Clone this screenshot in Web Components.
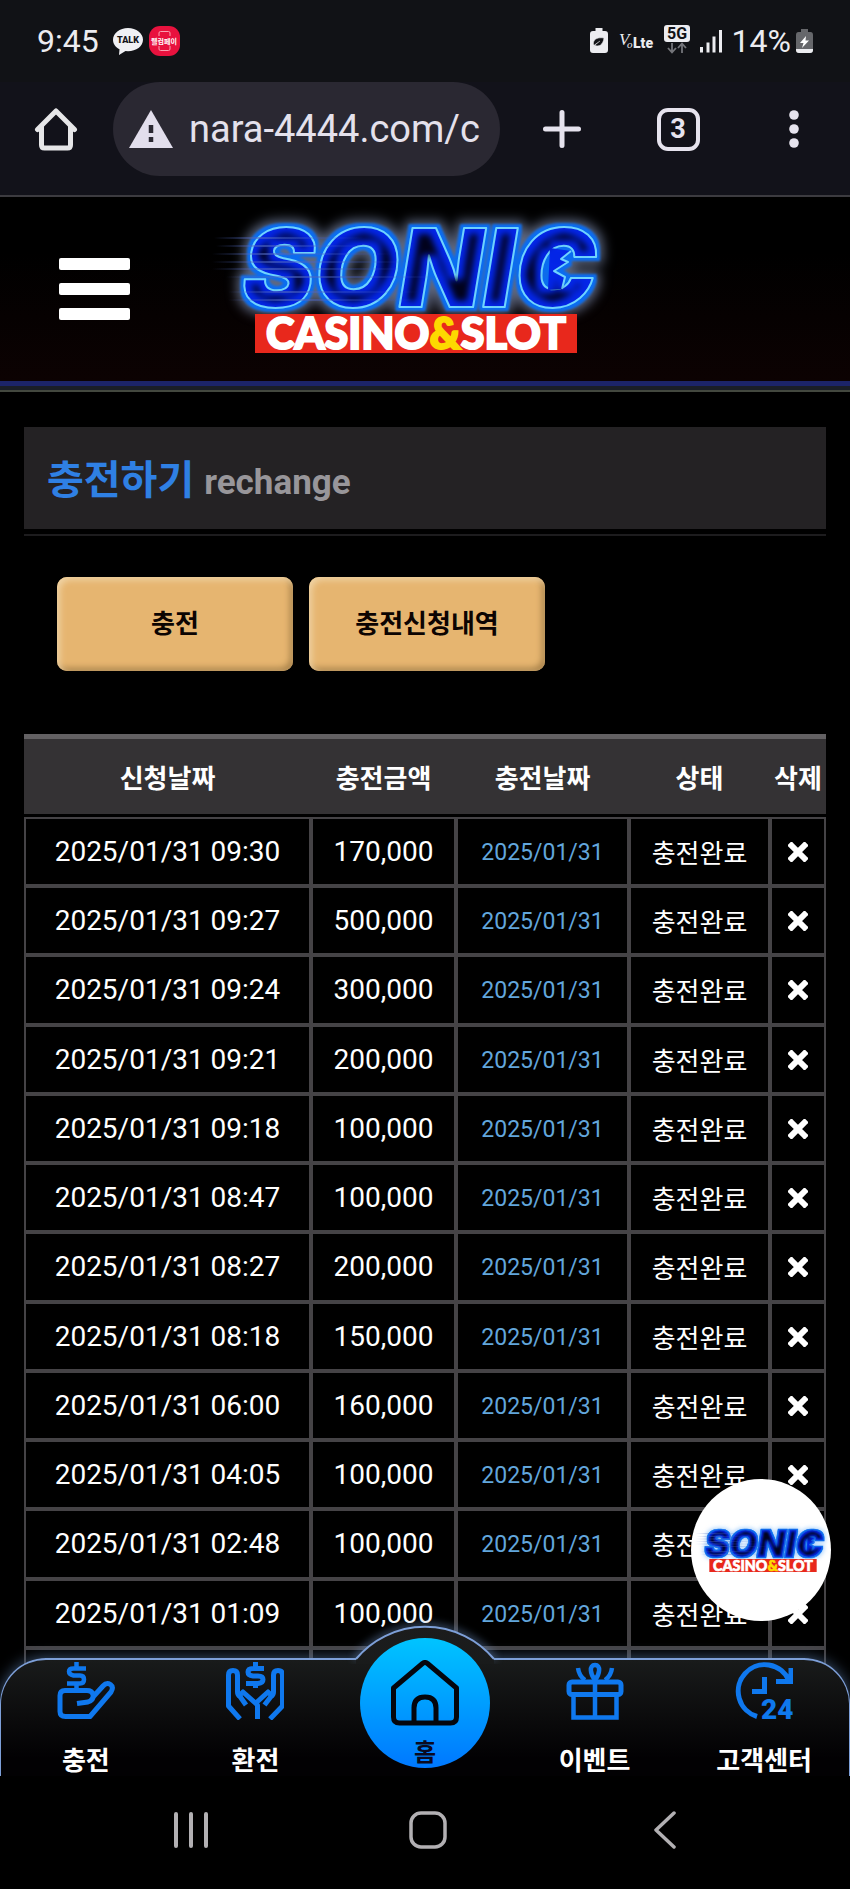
<!DOCTYPE html>
<html lang="ko">
<head>
<meta charset="utf-8">
<meta name="viewport" content="width=device-width, initial-scale=1">
<title>충전하기</title>
<style>
  html, body { margin: 0; background: #000; }
  body { font-family: Roboto, "Noto Sans CJK KR", sans-serif; color: #fff; }
</style>
</head>
<body>
<phone-screen>
  <status-bar></status-bar>
  <browser-bar></browser-bar>
  <site-view>
    <site-header></site-header>
    <page-title label="충전하기" sub="rechange"></page-title>
    <tab-buttons></tab-buttons>
    <history-table></history-table>
    <chat-fab slot="over"></chat-fab>
    <bottom-menu slot="over"></bottom-menu>
  </site-view>
  <system-nav></system-nav>
</phone-screen>

<script>
const define = (name, html, setup) => customElements.define(name, class extends HTMLElement {
  connectedCallback() {
    if (this.shadowRoot) return;
    const t = document.createElement('template');
    t.innerHTML = html;
    this.attachShadow({ mode: 'open' }).append(t.content.cloneNode(true));
    if (setup) setup(this, this.shadowRoot);
  }
});

define('phone-screen', `
<style>
  :host { display: flex; flex-direction: column; height: 100vh; overflow: hidden; background: #000; }
</style>
<slot></slot>`);

define('status-bar', `
<style>
  :host { display: flex; align-items: center; justify-content: space-between; height: 82px; flex: none;
    padding: 0 37px; box-sizing: border-box; background: #111216; color: #ececf0; font-size: 32px; line-height: 36px; }
  div { display: flex; align-items: center; }
  .l { gap: 6px; }
  .l svg:first-of-type { margin-left: 8px; }
  .r { gap: 10px; }
  .lv { gap: 5px; }
  svg { display: block; }
</style>
<div class="l">
  <span>9:45</span>
  <svg width="30" height="30" viewBox="0 0 30 30"><path d="M15 2C6.700 2 0 7.400 0 13.800c0 4 2.600 7.500 6.500 9.500L6 29l6.500-4 2.500.200c8.300 0 15-5.100 15-11.500S23.300 2 15 2z" fill="#f0f0f4"/><text x="15" y="17" font-size="9" font-weight="900" text-anchor="middle" fill="#15151a">TALK</text></svg>
  <svg width="31" height="32" viewBox="0 0 31 32"><rect y="1" width="31" height="30" rx="11" fill="#e8123e"/><path d="M10 11V8q0-1.500 1.500-1.500h8Q21 6.500 21 8v3M10 21v3q0 1.500 1.500 1.500h8q1.500 0 1.500-1.500v-3" fill="none" stroke="#f8a0b0" stroke-width="1"/><text x="15" y="19" font-size="7" font-weight="700" text-anchor="middle" fill="#fff">웰컴페이</text></svg>
</div>
<div class="r">
  <svg width="18" height="26" viewBox="0 0 18 26"><path d="M5.500 0h7v3H15q3 0 3 3v16q0 3-3 3H3q-3 0-3-3V6q0-3 3-3h2.500z" fill="#ececf0"/><path d="M2 20l3-2.500c4 1.500 8-.500 9-7.500-6-1-10 1-10.500 4.500-.300 1.500.200 2.200.700 2.700L10 13" fill="#111216" stroke="#ececf0" stroke-width=".6"/></svg>
  <svg width="36" height="22" viewBox="0 0 36 22"><g fill="#ececf0"><text x="1" y="15" font-family="Liberation Serif" font-style="italic" font-size="17">V</text><text x="9" y="18" font-family="Liberation Serif" font-style="italic" font-size="11">o</text><text x="15" y="18" font-size="14" font-weight="900">Lte</text></g></svg>
  <svg width="26" height="32" viewBox="0 0 26 32"><rect width="26" height="17" rx="3" fill="#ececf0"/><text x="13" y="14" font-size="16" font-weight="700" text-anchor="middle" fill="#111216">5G</text><path d="M8 18v9M4 23l4 4.500 4-4.500M18 28v-9M14 23l4-4.500 4 4.500" fill="none" stroke="#74757a" stroke-width="1.800"/></svg>
  <svg width="22" height="24" viewBox="0 0 22 24"><path d="M1.500 18v5.500M8 13.500v10M14 7.500v16M20.500 1v22.500" stroke="#ececf0" stroke-width="3"/></svg>
  <div class="lv"><span>14%</span>
  <svg width="17" height="26" viewBox="0 0 17 26"><path d="M5 1h7v3h2.500Q17 4 17 7v15q0 3-3 3H3q-3 0-3-3V7q0-3 2.500-3H5z" fill="#66676b"/><path d="M0 21h17v1q0 3-3 3H3q-3 0-3-3z" fill="#ececf0"/><path d="M10 8l-6 7h3.500L6 20l7-7.500H9.500z" fill="#fff"/></svg></div>
</div>`);

define('browser-bar', `
<style>
  :host { display: flex; align-items: flex-start; height: 115px; flex: none; box-sizing: border-box; padding: 0 34px;
    background: #12121a; border-bottom: 2px solid #3c3b40; }
  button { all: unset; display: grid; place-items: center; width: 44px; height: 94px; flex: none; }
  form { flex: 1; min-width: 0; display: flex; align-items: center; gap: 16px; height: 94px; margin: 0 40px 0 35px;
    padding: 0 8px 0 16px; box-sizing: border-box; background: #2a2832; border-radius: 47px; }
  form svg { flex: none; }
  input { all: unset; flex: 1; min-width: 0; font: 38px/48px Roboto, sans-serif; color: #e4e1ec; }
  .end { display: flex; gap: 72px; }
  .count { box-sizing: border-box; display: grid; place-items: center; width: 43px; height: 43px; border: 4px solid #e6e3ee;
    border-radius: 11px; font: 700 27px/30px Roboto, sans-serif; color: #e6e3ee; }
</style>
<button aria-label="홈"><svg width="44" height="44" viewBox="0 0 44 44" fill="none" stroke="#e6e6e8" stroke-width="5" stroke-linecap="round" stroke-linejoin="round"><path d="M3.500 22.500L22 4l18.500 18.500M7.500 19v19q0 3 3 3h23q3 0 3-3V19"/></svg></button>
<form>
  <svg width="44" height="38" viewBox="0 0 44 38"><path d="M22 0L44 38H0z" fill="#e2deec"/><path d="M22 15v8M22 27v5" stroke="#2a2832" stroke-width="4.500"/></svg>
  <input type="text" value="nara-4444.com/c" aria-label="주소">
</form>
<div class="end">
  <button aria-label="새 탭"><svg width="38" height="38" viewBox="0 0 38 38"><path d="M2.500 19h33M19 2.500v33" stroke="#e6e3ee" stroke-width="5" stroke-linecap="round"/></svg></button>
  <button aria-label="탭 목록"><span class="count">3</span></button>
  <button aria-label="메뉴"><svg width="10" height="38" viewBox="0 0 10 38" fill="#e6e3ee"><circle cx="5" cy="5" r="4.800"/><circle cx="5" cy="19" r="4.800"/><circle cx="5" cy="33" r="4.800"/></svg></button>
</div>`);

define('site-view', `
<style>
  :host { display: block; position: relative; flex: 1; min-height: 0; overflow: hidden; background: #000; }
</style>
<slot></slot><slot name="over"></slot>`);

define('sonic-logo', `
<style>
  :host { display: block; }
  svg { display: block; width: 100%; height: auto; overflow: visible; }
  .s { font: italic 900 109px Inter, sans-serif; filter: url(#neon); --edge: #6fd4ff; }
  .halo { flood-color: #8fa0c8; flood-opacity: .65; }
  .c { font: 900 43px Lato, sans-serif; }
  :host([light]) .halo { flood-color: #58a8f8; flood-opacity: .5; }
  :host([light]) .s { --edge: #1c62e0; }
</style>
<svg viewBox="200 212 450 150" role="img" aria-label="SONIC CASINO&amp;SLOT">
  <defs>
    <filter id="neon" x="-15%" y="-40%" width="130%" height="180%" color-interpolation-filters="sRGB">
      <feMorphology in="SourceAlpha" operator="dilate" radius="6" result="far"/>
      <feGaussianBlur in="far" stdDeviation="6" result="farSoft"/>
      <feFlood class="halo"/><feComposite in2="farSoft" operator="in" result="halo"/>
      <feMorphology in="SourceAlpha" operator="dilate" radius="3" result="near"/>
      <feGaussianBlur in="near" stdDeviation="1" result="nearSoft"/>
      <feFlood flood-color="#0a6cf0"/><feComposite in2="nearSoft" operator="in" result="rim"/>
      <feMorphology in="SourceAlpha" operator="erode" radius="7" result="inner"/>
      <feGaussianBlur in="inner" stdDeviation="3" result="innerSoft"/>
      <feFlood flood-color="#01021c"/><feComposite in2="innerSoft" operator="in" result="core"/>
      <feMerge><feMergeNode in="halo"/><feMergeNode in="rim"/><feMergeNode in="SourceGraphic"/><feMergeNode in="core"/></feMerge>
    </filter>
    <linearGradient id="fade" x1="0" x2="1"><stop offset="0" stop-color="#5068c0" stop-opacity="0"/><stop offset=".3" stop-color="#5068c0" stop-opacity=".6"/><stop offset="1" stop-color="#3858d0" stop-opacity="0"/></linearGradient>
  </defs>
  <g class="s" stroke-linejoin="round">
    <text x="242" y="307" fill="#0426e8" style="stroke:var(--edge)" stroke-width="2">SONIC</text>
    <path d="M550 248L571 251L561 259L568 262L554 271L565 277L562 289L548 290z" fill="#0426e8"/>
    <path d="M571 251L561 259L568 262L554 271L565 277L562 289" fill="none" style="stroke:var(--edge)" stroke-width="2"/>
  </g>
  <g fill="url(#fade)"><rect x="214" y="237" width="150" height="2"/><rect x="216" y="245" width="160" height="2"/><rect x="212" y="253" width="180" height="2"/><rect x="212" y="261" width="200" height="2"/><rect x="212" y="268" width="200" height="2"/><rect x="226" y="276" width="220" height="2"/><rect x="228" y="291" width="190" height="2"/><rect x="228" y="299" width="190" height="2"/></g>
  <rect x="255" y="314" width="322" height="39" fill="#e8281c"/>
  <text class="c" x="416" y="349" text-anchor="middle" fill="#fff" stroke="#fff" stroke-width="2">CASINO<tspan fill="#fdd900" stroke="#fdd900">&amp;</tspan>SLOT</text>
</svg>`);

define('site-header', `
<style>
  :host { display: grid; grid-template-columns: 1fr 450px 1fr; align-items: center; height: 184px;
    background: linear-gradient(#000 30%, #0c0202); border-bottom: 5px solid #1c2468; }
  button { all: unset; display: flex; flex-direction: column; gap: 13px; width: 71px; margin: 0 0 0 59px; }
  i { height: 12px; border-radius: 2px; background: #fff; }
  sonic-logo { margin-top: -4px; }
</style>
<button aria-label="메뉴"><i></i><i></i><i></i></button>
<sonic-logo></sonic-logo>`);

define('page-title', `
<style>
  :host { display: block; border-top: 4px solid #1a1e26; }
  .rule { height: 2px; background: #43483f; }
  .box { margin: 35px 24px 0; border-bottom: 2px solid #1d1c1e; padding-bottom: 5px; }
  h1 { margin: 0; height: 102px; box-sizing: border-box; padding: 20px 23px; display: flex; align-items: baseline; gap: 10px;
    background: #242224; color: #2f80e4; font: 700 40px/60px "Noto Sans CJK KR", sans-serif; }
  small { font: 700 35px/40px Roboto, sans-serif; color: #98969a; }
</style>
<div class="rule"></div>
<div class="box"><h1><span></span><small></small></h1></div>`, (el, root) => {
  root.querySelector('span').textContent = el.getAttribute('label');
  root.querySelector('small').textContent = el.getAttribute('sub');
});

define('tab-buttons', `
<style>
  :host { display: flex; gap: 16px; padding: 41px 57px 63px; }
  button { width: 236px; height: 94px; padding: 0 0 4px; border: 0; border-radius: 10px; background: #e6b570; color: #0c0402;
    font: 700 26px/38px "Noto Sans CJK KR", sans-serif;
    box-shadow: inset 3px 3px 6px #f0d3a4, inset -3px -3px 6px #a8824a; }
</style>
<button>충전</button><button>충전신청내역</button>`);

define('history-table', `
<style>
  :host { display: block; padding: 0 24px; }
  table { width: 100%; table-layout: fixed; border-collapse: separate; border-spacing: 0; }
  th, td { box-sizing: border-box; padding: 0; text-align: center; white-space: nowrap; }
  th { height: 80px; border-top: 5px solid #636163; background: #343234; font: 700 26px/38px "Noto Sans CJK KR", sans-serif; }
  .gap td { height: 3px; border: 0; }
  td { height: 69px; border: 2px solid #454346; font: 28px/40px Roboto, sans-serif; }
  tr:nth-child(4n) td { height: 70px; }
  .date { font-size: 23px; line-height: 40px; padding-top: 2px; color: #62a6dc; }
  .state { font: 26px/38px "Noto Sans CJK KR", sans-serif; }
  button { all: unset; display: block; margin: auto; width: 20px; height: 20px; }
  svg { display: block; }
  .c2 { width: 145px; } .c3 { width: 173px; } .c4 { width: 141px; } .c5 { width: 56px; }
</style>
<table>
  <colgroup><col><col class="c2"><col class="c3"><col class="c4"><col class="c5"></colgroup>
  <thead><tr><th>신청날짜</th><th>충전금액</th><th>충전날짜</th><th>상태</th><th>삭제</th></tr></thead>
  <tbody><tr class="gap"><td colspan="5"></td></tr></tbody>
</table>`, (el, root) => {
  const rows = [['09:30','170,000'],['09:27','500,000'],['09:24','300,000'],['09:21','200,000'],['09:18','100,000'],['08:47','100,000'],
    ['08:27','200,000'],['08:18','150,000'],['06:00','160,000'],['04:05','100,000'],['02:48','100,000'],['01:09','100,000']];
  const body = root.querySelector('tbody');
  body.insertAdjacentHTML('beforeend', rows.map(([t, n]) => `<tr><td>2025/01/31 ${t}</td><td>${n}</td><td class="date">2025/01/31</td><td class="state">충전완료</td>
    <td><button aria-label="삭제"><svg width="20" height="20" viewBox="0 0 20 20"><path d="M3.500 3.500l13 13M16.500 3.500l-13 13" stroke="#fff" stroke-width="6" stroke-linecap="square"/></svg></button></td></tr>`).join('')
    + '<tr><td></td><td></td><td></td><td></td><td></td></tr>');
});

define('chat-fab', `
<style>
  :host { position: absolute; right: 19px; bottom: 155px; }
  a { display: grid; place-items: center; width: 140px; height: 142px; border-radius: 50%; background: #fff; }
  sonic-logo { width: 150px; }
</style>
<a href="#" aria-label="SONIC"><sonic-logo light></sonic-logo></a>`);

define('menu-item', `
<style>
  :host { display: block; flex: 1; }
  a { display: flex; flex-direction: column; align-items: center; color: #fff; text-decoration: none;
    font: 700 26px/38px "Noto Sans CJK KR", sans-serif; padding-top: 2px; gap: 20px; }
</style>
<a href="#"><slot name="icon"></slot><slot></slot></a>`);

define('bottom-menu', `
<style>
  :host { position: absolute; left: 0; right: 0; bottom: 0; }
  .bar { display: flex; height: 118px; box-sizing: border-box; border: 2px solid #7d9fd8; border-width: 2px 1px 0;
    border-radius: 46px 46px 0 0; background: linear-gradient(#191b1b, #0b0b0c 50%, #020103 85%); box-shadow: 0 -1px 14px #5a7ba8a0; }
  .bump { position: absolute; left: 50%; top: -42px; margin-left: -100px; }
  .home { position: absolute; left: 50%; top: -20px; margin-left: -65px; width: 130px; height: 130px; box-sizing: border-box; padding-top: 22px;
    display: flex; flex-direction: column; align-items: center; gap: 8px; border-radius: 50%; background: linear-gradient(#00c4ff, #0078ff);
    color: #0a0a20; text-decoration: none; font: 700 24px/34px "Noto Sans CJK KR", sans-serif; }
  .blank { flex: 1; }
  svg { display: block; }
</style>
<nav>
  <div class="bar">
    <menu-item><svg slot="icon" width="58" height="58" viewBox="0 0 58 58" fill="none" stroke="#0f78ee" stroke-width="5" stroke-linejoin="round"><path d="M29 6.500H16.500Q12 6.500 12 9.500T16.500 13.500H23Q27 13.500 27 17.500T23 21.500H10M19.500 0v6M19.500 21v7" stroke-width="4.500"/><path d="M20 41.500L31 40Q37 38 36 32.500 35 28.500 30 28.500H8Q3 28.500 3 33.500V49.500Q3 54.500 8.500 54.500H33L54 30Q57 25 53.500 22.500 49.500 20 46 24L36 35"/></svg>충전</menu-item>
    <menu-item><svg slot="icon" width="58" height="58" viewBox="0 0 58 58" fill="none" stroke="#0f78ee" stroke-width="5" stroke-linejoin="round"><path d="M38 6.500H27q-5 0-5 3.500t5 4h5q5 0 5 3.500t-5 4H20M29.500 0v6M29.500 21v5"/><path d="M14 57L2.500 44V13q0-4.500 4.500-4.500t4.500 4.500v17q0 3 2.500 4.500l6 8.500M14 33l3-3 14.500 13V57M44 57l12.500-13V13q0-4.500-4.500-4.500T47.500 13v17q0 3-2.500 4.500L38.500 43M45 33l-3-3-11 10"/></svg>환전</menu-item>
    <span class="blank"></span>
    <menu-item><svg slot="icon" width="58" height="58" viewBox="0 0 58 58" fill="none" stroke="#0f78ee" stroke-width="5"><rect x="3" y="20" width="52" height="12.500" rx="3"/><path d="M7.500 32v23.500h43V32M29 20v35M29 18c-5-6-6-15 0-15s5 9 0 15zM12 6q1 8 7 12M46 6q-1 8-7 12" stroke-width="4.500"/></svg>이벤트</menu-item>
    <menu-item><svg slot="icon" width="58" height="58" viewBox="0 0 58 58" fill="none" stroke="#0f78ee" stroke-width="5"><path d="M22 54.500A26.500 26.500 0 1 1 54 18.500M56 6v13.500H41M29.500 15v14.500H17"/><text x="26" y="57" font-family="Roboto" font-size="28" font-weight="900" fill="#0f78ee" stroke="none">24</text></svg>고객센터</menu-item>
  </div>
  <svg class="bump" width="200" height="48" viewBox="0 0 200 48"><defs><filter id="g" x="-20%" y="-50%" width="140%" height="200%"><feGaussianBlur stdDeviation="4"/></filter><linearGradient id="f" x1="0" y1="0" x2="0" y2="1"><stop offset="0" stop-color="#1c1c1d"/><stop offset="1" stop-color="#191b1b"/></linearGradient></defs>
    <path d="M31 43A90 90 0 0 1 169 43" fill="none" stroke="#6d8fc0" stroke-width="6" opacity=".6" filter="url(#g)"/>
    <path d="M31 43A90 90 0 0 1 169 43V48H31z" fill="url(#f)"/><path d="M31 43A90 90 0 0 1 169 43" fill="none" stroke="#7d9fd8" stroke-width="2"/></svg>
  <a class="home" href="#"><svg width="68" height="66" viewBox="0 0 68 66" fill="none" stroke="#04060e" stroke-width="5" stroke-linejoin="round"><path d="M31.500 3.500q2.500-2 5 0L65.500 28V57q0 6-6 6h-51q-6 0-6-6V28zM23 62V48q0-11 11-11t11 11v14"/></svg>홈</a>
</nav>`);

define('system-nav', `
<style>
  :host { display: grid; grid-template-columns: repeat(3, 1fr); align-items: start; flex: none; height: 113px; box-sizing: border-box;
    padding: 35px 66px 0 72px; background: #000; }
  button { all: unset; display: grid; place-items: center; }
</style>
<button aria-label="최근 앱"><svg width="36" height="38" viewBox="0 0 36 38"><path d="M3 3v32M18 3v32M33 3v32" stroke="#b2b0b3" stroke-width="4" stroke-linecap="round"/></svg></button>
<button aria-label="홈"><svg width="38" height="38" viewBox="0 0 38 38"><rect x="2" y="2" width="34" height="34" rx="10" fill="none" stroke="#b2b0b3" stroke-width="3.500"/></svg></button>
<button aria-label="뒤로"><svg width="24" height="38" viewBox="0 0 24 38"><path d="M21 2L3 19l18 17" fill="none" stroke="#b2b0b3" stroke-width="3.500" stroke-linecap="round" stroke-linejoin="round"/></svg></button>`);
</script>
</body>
</html>
